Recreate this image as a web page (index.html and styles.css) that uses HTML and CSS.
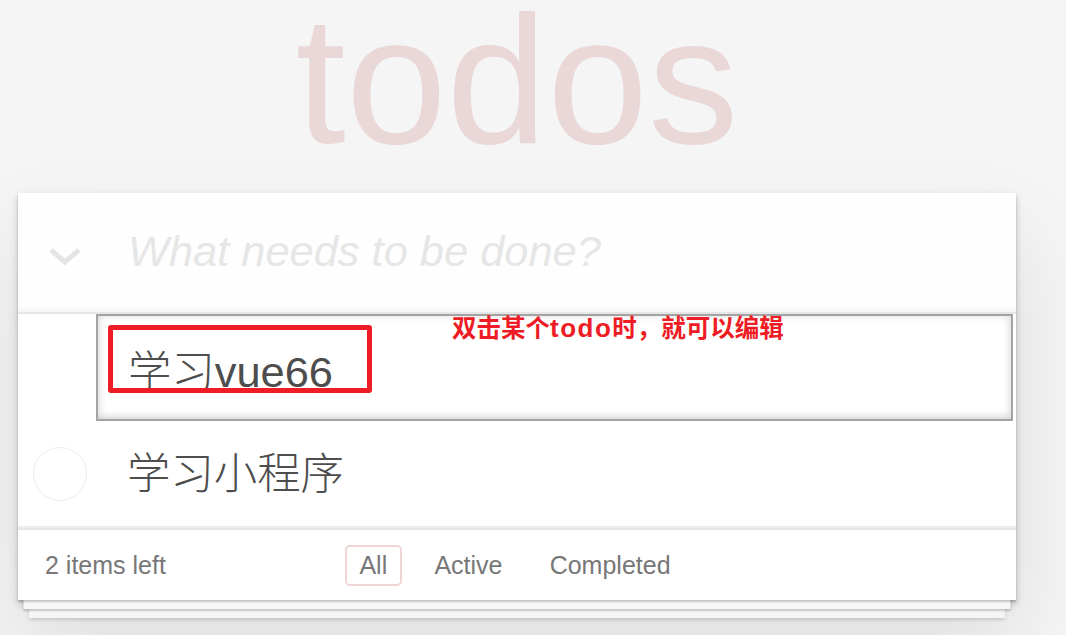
FILE: index.html
```html
<!DOCTYPE html>
<html lang="zh-CN">
<head>
<meta charset="utf-8">
<title>todos</title>
<link rel="stylesheet" href="styles.css">
</head>
<body>
<section class="todoapp">
  <h1 class="title">todos</h1>
  <div class="card">
    <header class="header">
      <span class="toggle-all" aria-hidden="true">
        <svg width="34" height="20" viewBox="0 0 34 20"><polyline points="3,3 17,15 31,3" fill="none" stroke="#e4e4e4" stroke-width="5"/></svg>
      </span>
      <input class="new-todo" placeholder="What needs to be done?">
    </header>
    <section class="main">
      <ul class="todo-list">
        <li class="editing"><input class="edit" value="学习vue66"></li>
        <li class="item"><span class="toggle"></span><label class="item-label">学习小程序</label></li>
      </ul>
    </section>
    <footer class="footer">
      <span class="todo-count"><span class="num">2</span> items left</span>
      <ul class="filters">
        <li><a class="filter selected">All</a></li>
        <li><a class="filter">Active</a></li>
        <li><a class="filter">Completed</a></li>
      </ul>
      <span class="spacer"></span>
    </footer>
  </div>
  <div class="note-box"></div>
  <div class="note-text">双击某个<span class="latin">todo</span>时，就可以编辑</div>
</section>
</body>
</html>
```
FILE: styles.css
```css
* { box-sizing: border-box; }
html, body { margin: 0; padding: 0; }
body {
  background: #f5f5f5;
  font-family: "Liberation Sans", Arial, "Noto Sans CJK SC", sans-serif;
  color: #4d4d4d;
  font-weight: 300;
  overflow: hidden;
  height: 635px;
}
.todoapp {
  position: relative;
  width: 998px;
  margin-left: 18px;
}
.title {
  margin: 0 0 33px;
  height: 160px;
  font-size: 181px;
  line-height: 160px;
  font-weight: 100;
  text-align: center;
  color: rgba(175, 47, 47, 0.15);
}
.card {
  background: #fff;
  box-shadow:
    0 1.8px 1.8px rgba(0, 0, 0, 0.2),
    0 14.5px 0 -5.4px #f6f6f6,
    0 16.3px 1.8px -5.4px rgba(0, 0, 0, 0.2),
    0 29px 0 -10.9px #f6f6f6,
    0 30.8px 3.6px -10.9px rgba(0, 0, 0, 0.2),
    0 3.6px 7.2px 0 rgba(0, 0, 0, 0.2),
    0 45px 90px 0 rgba(0, 0, 0, 0.1);
}
.header { position: relative; }
.toggle-all {
  position: absolute;
  left: 30px;
  top: 54px;
  width: 34px;
  height: 20px;
  line-height: 0;
}
.new-todo {
  display: block;
  width: 100%;
  height: 119px;
  margin: 0;
  border: 0;
  outline: 0;
  padding: 28px 29px 30px 110px;
  font-family: inherit;
  font-size: 43.4px;
  line-height: 60.8px;
  font-weight: 300;
  color: #4d4d4d;
  background: rgba(0, 0, 0, 0.003);
  box-shadow: inset 0 -3.6px 1.8px rgba(0, 0, 0, 0.03);
}
.new-todo::placeholder {
  font-style: italic;
  font-weight: 300;
  color: #e6e6e6;
}
.main { border-top: 2px solid #e6e6e6; }
.todo-list { list-style: none; margin: 0; padding: 0; }
.editing { padding: 0; }
.edit {
  display: block;
  width: 917px;
  height: 107px;
  margin: 0 0 0 78px;
  padding: 0 29px 0 30px;
  border: 2px solid #a3a3a3;
  outline: 0;
  box-shadow: inset 0 -1.8px 9px 0 rgba(0, 0, 0, 0.2);
  font-family: inherit;
  font-size: 43.4px;
  line-height: 60.8px;
  font-weight: 300;
  color: #4d4d4d;
  background: #fff;
}
.item {
  display: flex;
  align-items: center;
  height: 107px;
  border-bottom: 2px solid #ededed;
}
.toggle {
  flex: none;
  width: 54px;
  height: 54px;
  margin-left: 15px;
  border: 1.6px solid #ededed;
  border-radius: 50%;
}
.item-label {
  margin-left: 40px;
  font-size: 43.4px;
  line-height: 52px;
  color: #4d4d4d;
}
.footer {
  display: grid;
  grid-template-columns: 1fr auto 1fr;
  align-items: center;
  height: 72px;
  padding: 0 27px 0 27px;
  border-top: 2px solid #e6e6e6;
  color: #777;
  font-size: 25px;
}
.todo-count { text-align: left; }
.filters {
  display: flex;
  gap: 7px;
  list-style: none;
  margin: 0 0 0 -4px;
  padding: 0;
}
.filter {
  display: block;
  margin: 0 5.4px;
  padding: 4px 12.7px;
  line-height: 29px;
  border: 2px solid transparent;
  border-radius: 5px;
  color: inherit;
  text-decoration: none;
}
.filter.selected { border-color: rgba(175, 47, 47, 0.2); }
.note-box {
  position: absolute;
  left: 90px;
  top: 325px;
  width: 264px;
  height: 68px;
  border: 5.7px solid #ee1c25;
  border-radius: 3px;
}
.note-text {
  position: absolute;
  left: 434px;
  top: 313px;
  font-family: "Noto Sans CJK SC", sans-serif;
  font-size: 24.5px;
  line-height: 28px;
  font-weight: 700;
  color: #ee1c25;
  white-space: nowrap;
}
.latin {
  font-family: "Liberation Sans", Arial, sans-serif;
  letter-spacing: 1.5px;
  font-size: 26px;
}
```
